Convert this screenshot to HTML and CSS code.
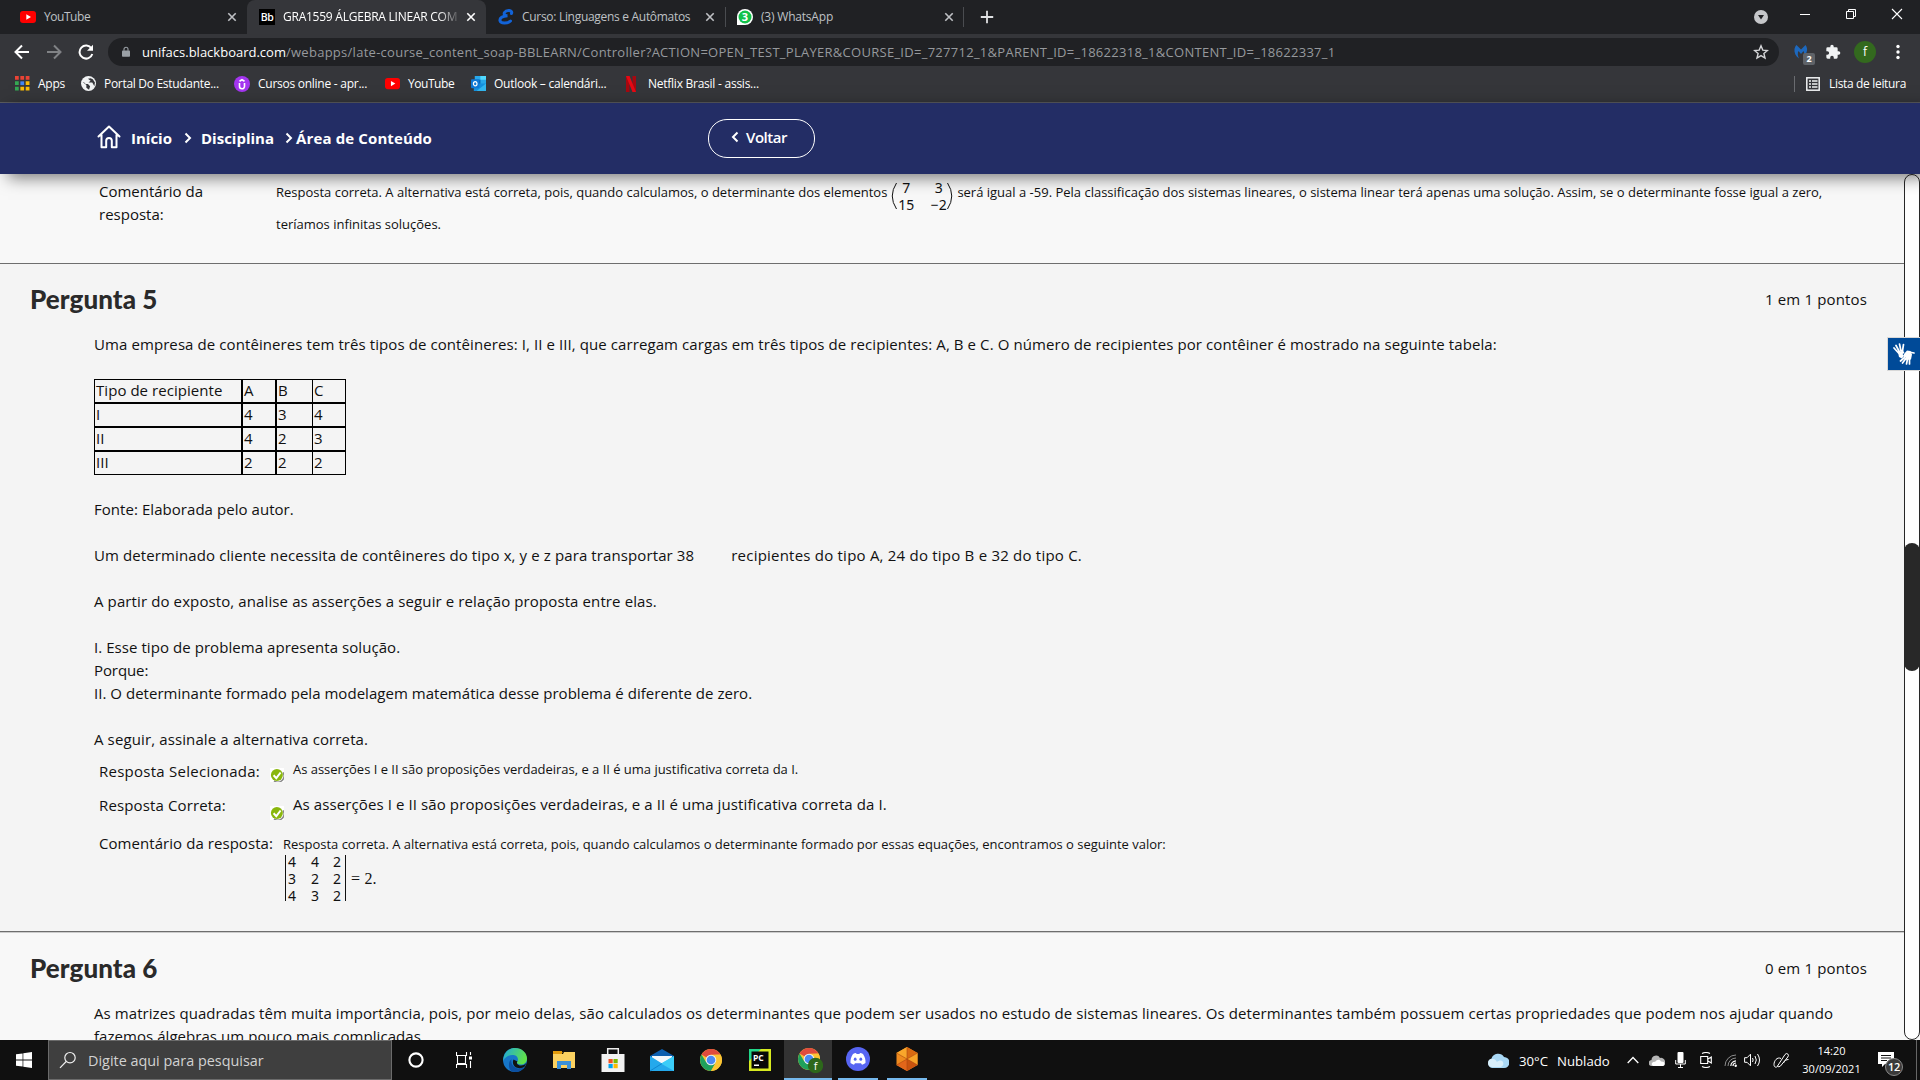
FILE: index.html
```html
<!DOCTYPE html>
<html lang="pt-BR">
<head>
<meta charset="utf-8">
<title>GRA1559 ÁLGEBRA LINEAR COMPUTACIONAL</title>
<link rel="stylesheet" href="styles.css">
</head>
<body>
<svg class="defs" width="0" height="0">
  <defs>
    <symbol id="yt" viewBox="0 0 16 16"><rect y="2" width="16" height="12" rx="3" fill="#f00"/><path d="M6.3 5.2v5.6L11 8z" fill="#fff"/></symbol>
    <symbol id="x" viewBox="0 0 10 10"><path d="M1.3 1.3l7.4 7.4M8.7 1.3L1.3 8.7" stroke="currentColor" stroke-width="1.6" fill="none"/></symbol>
    <symbol id="chev" viewBox="0 0 8 12"><path d="M1.5 1.5L6 6l-4.500 4.500" stroke="currentColor" stroke-width="2" fill="none"/></symbol>
    <symbol id="check" viewBox="0 0 14 14"><rect width="14" height="14" fill="#fff"/><path d="M13 4.500a6.200 6.200 0 0 1-9 8.300" stroke="#888" stroke-width="1.500" fill="none"/><circle cx="6.900" cy="7" r="6" fill="#8ab70d"/><path d="M3.600 7.200l2.700 2.900 4.300-5.600" stroke="#fff" stroke-width="2" fill="none"/></symbol>
    <symbol id="chrome" viewBox="0 0 24 24"><circle cx="12" cy="12" r="11" fill="#fbc534"/><path d="M2.500 6.500A11 11 0 0 1 21.500 6.500L12 7v5z" fill="#e04b3e"/><path d="M2.500 6.500A11 11 0 0 0 12 23l5-9-5-2-5 2z" fill="#1fa15d"/><path d="M12 6.700h9.600A11 11 0 0 1 12 23l4.800-8.300z" fill="#fbc534"/><circle cx="12" cy="12" r="5.300" fill="#f1f1f1"/><circle cx="12" cy="12" r="4.300" fill="#4a8af4"/></symbol>
  </defs>
</svg>

<header class="browser">
  <div class="tabs">
    <div class="tab">
      <svg class="fav"><use href="#yt"/></svg><span class="tab-title yt-title">YouTube</span><svg class="close"><use href="#x"/></svg>
    </div>
    <div class="tab active">
      <span class="fav bb">Bb</span><span class="tab-title course-title">GRA1559 ÁLGEBRA LINEAR COM</span><svg class="close"><use href="#x"/></svg>
    </div>
    <div class="tab">
      <svg class="fav" viewBox="0 0 16 16"><path d="M13.500 4.500C15 1 8.500.5 6.500 3.500 5.500 5.500 7 7 9.500 6.800 4.500 7 1.500 9 2 11.800c.6 3 7.500 3 10.500.2" stroke="#1263d8" stroke-width="3" fill="none" stroke-linecap="round"/></svg><span class="tab-title ling-title">Curso: Linguagens e Autômatos</span><svg class="close"><use href="#x"/></svg>
    </div>
    <div class="tab last">
      <svg class="fav" viewBox="0 0 16 16"><path d="M0 16V8a8 8 0 1 1 8 8z" fill="#fff"/><circle cx="8" cy="8" r="6.500" fill="#12c24a"/><text x="8" y="12" font-size="11" font-weight="700" text-anchor="middle" fill="#fff" font-family="Open Sans, sans-serif">3</text></svg><span class="tab-title wa-title">(3) WhatsApp</span><svg class="close"><use href="#x"/></svg>
    </div>
    <svg class="new-tab" viewBox="0 0 14 14"><path d="M7 .8v12.400M.8 7h12.400" stroke="#e0e1e3" stroke-width="1.800"/></svg>
    <div class="window-controls">
      <svg width="16" height="16" viewBox="0 0 16 16"><circle cx="8" cy="8" r="7" fill="#c5c7ca"/><path d="M5 6h6l-3 4.500z" fill="#202124"/></svg>
      <svg width="12" height="12" viewBox="0 0 12 12"><path d="M1 6.500h10" stroke="#fff"/></svg>
      <svg width="12" height="12" viewBox="0 0 12 12"><path d="M1.500 3.500h7v7h-7zM3.500 3.500v-2h7v7h-2" stroke="#fff" fill="none"/></svg>
      <svg width="12" height="12" viewBox="0 0 12 12"><path d="M1 1l10 10M11 1L1 11" stroke="#fff" stroke-width="1.100"/></svg>
    </div>
  </div>

  <div class="toolbar">
    <svg class="nav-icon" viewBox="0 0 16 16"><path d="M15 8H2M8 1.500L1.500 8 8 14.500" stroke="#fff" stroke-width="2" fill="none"/></svg>
    <svg class="nav-icon" viewBox="0 0 16 16"><path d="M1 8h13M8 1.500L14.500 8 8 14.500" stroke="#808285" stroke-width="2" fill="none"/></svg>
    <svg class="nav-icon" viewBox="0 0 16 16"><path d="M13.500 4.500A6.500 6.500 0 1 0 14.300 10" stroke="#fff" stroke-width="2" fill="none"/><path d="M15 .8v6H9z" fill="#fff"/></svg>
    <div class="omnibox">
      <svg class="lock" viewBox="0 0 10 14"><rect y="5" width="10" height="8" rx="1" fill="#9aa0a6"/><path d="M2.500 5.500V3.500a2.500 2.500 0 0 1 5 0v2" stroke="#9aa0a6" stroke-width="1.400" fill="none"/></svg>
      <span class="host">unifacs.blackboard.com</span><span class="path">/webapps/late-course_content_soap-BBLEARN/Controller?ACTION=OPEN_TEST_PLAYER&amp;COURSE_ID=_727712_1&amp;PARENT_ID=_18622318_1&amp;CONTENT_ID=_18622337_1</span>
      <svg class="star" viewBox="0 0 16 16"><path d="M8 1.800l1.800 4.300 4.600.4-3.500 3 1.100 4.500L8 11.600 4 14l1.100-4.500-3.500-3 4.600-.4z" stroke="#d5d6d8" stroke-width="1.400" fill="none"/></svg>
    </div>
    <div class="ext">
      <svg width="16" height="16" viewBox="0 0 16 16"><path d="M1.500 5C1 8.500 2.500 12 6 14.500 4.500 11.500 4.500 9 5.500 7L8 10l2.500-3c1 2 .8 3.500.2 5C14 9.500 15.500 5 12.500 1L8 5.500 3.500 1C2.500 2 1.800 3.500 1.500 5z" fill="#1d68bd"/></svg>
      <span class="ext-badge">2</span>
    </div>
    <svg class="puzzle" viewBox="0 0 24 24"><path d="M20.500 11H19V7a2 2 0 0 0-2-2h-4V3.500a2.500 2.500 0 0 0-5 0V5H4a2 2 0 0 0-2 2v3.800h1.500a2.700 2.700 0 0 1 0 5.400H2V20a2 2 0 0 0 2 2h3.800v-1.500a2.700 2.700 0 0 1 5.400 0V22H17a2 2 0 0 0 2-2v-4h1.500a2.500 2.500 0 0 0 0-5z" fill="#f1f3f4"/></svg>
    <span class="avatar">f</span>
    <svg class="dots" viewBox="0 0 4 16"><circle cx="2" cy="2.500" r="1.700" fill="#fff"/><circle cx="2" cy="8" r="1.700" fill="#fff"/><circle cx="2" cy="13.500" r="1.700" fill="#fff"/></svg>
  </div>

  <div class="bookmarks">
    <svg class="bm-icon" viewBox="0 0 14 14"><path d="M0 0h3.500v3.500H0zM5 0h3.500v3.500H5zM10 0h3.500v3.500H10z" fill="#ea4335"/><path d="M0 5h3.500v3.500H0zM0 10h3.500v3.500H0z" fill="#34a853"/><path d="M5 5h3.500v3.500H5z" fill="#4285f4"/><path d="M10 5h3.500v3.500H10zM5 10h3.500v3.500H5zM10 10h3.500v3.500H10z" fill="#fbbc05"/></svg>
    <span class="bm bm-apps">Apps</span>
    <svg class="bm-icon" viewBox="0 0 14 14"><circle cx="7" cy="7" r="7" fill="#f1f3f4"/><path d="M1.500 5.500L5 8.500v2.500l2.500 1.800 1-3.300L6.500 7.500H4.300L3 6zM6.500 2.500L9 4.500 7 6h3.500l2 3.500.5-3.500-2-3-2-1z" fill="#35363a"/></svg>
    <span class="bm bm-portal">Portal Do Estudante...</span>
    <svg class="bm-icon udemy" viewBox="0 0 16 16"><circle cx="8" cy="8" r="8" fill="#a435f0"/><path d="M5.500 7v3.300a2.500 2.500 0 0 0 5 0V7M5.500 5.200L8 3.700l2.500 1.500" stroke="#fff" stroke-width="1.600" fill="none"/></svg>
    <span class="bm bm-cursos">Cursos online - apr...</span>
    <svg class="bm-icon"><use href="#yt"/></svg>
    <span class="bm bm-yt">YouTube</span>
    <svg class="bm-icon" viewBox="0 0 16 16"><path d="M4 0h12v9H4z" fill="#28a8ea"/><path d="M10 0h6v4h-6z" fill="#50d9ff"/><path d="M4 4h6v5H4z" fill="#0358a7"/><path d="M3 8l13 0v8H3z" fill="#1490df"/><path d="M16 8v8H6z" fill="#32b7f0"/><rect y="3.500" width="9" height="9.500" rx="1" fill="#0f78d4"/><ellipse cx="4.500" cy="8.200" rx="1.900" ry="2.300" stroke="#fff" stroke-width="1.300" fill="none"/></svg>
    <span class="bm bm-outlook">Outlook – calendári...</span>
    <svg class="bm-icon netflix" viewBox="0 0 10 16"><path d="M0 0h3.500v16H0zM6.500 0H10v16H6.500z" fill="#a60810"/><path d="M0 0h3.500L10 16H6.500z" fill="#e50914"/></svg>
    <span class="bm bm-netflix">Netflix Brasil - assis...</span>
    <div class="reading-list">
      <svg width="14" height="14" viewBox="0 0 14 14"><rect x=".8" y=".8" width="12.400" height="12.400" stroke="#f1f3f4" stroke-width="1.500" fill="none"/><path d="M3 4h2M6 4h5.500M3 7h2M6 7h5.500M3 10h2M6 10h5.500" stroke="#f1f3f4" stroke-width="1.600"/></svg>
      <span class="bm bm-list">Lista de leitura</span>
    </div>
  </div>
</header>

<nav class="site-nav">
  <svg class="home" viewBox="0 0 24 24"><path d="M1.500 11.500L12 1.500l10.500 10M4.500 10v12.300h4.700v-6.500a2.800 2.800 0 0 1 5.600 0v6.500h4.700V10" stroke="#fff" stroke-width="2" fill="none" stroke-linejoin="round" stroke-linecap="round"/></svg>
  <span class="crumb c-inicio">Início</span>
  <svg class="chev"><use href="#chev"/></svg>
  <span class="crumb c-disc">Disciplina</span>
  <svg class="chev"><use href="#chev"/></svg>
  <span class="crumb c-area">Área de Conteúdo</span>
  <a class="back"><svg class="chev left"><use href="#chev"/></svg><span>Voltar</span></a>
</nav>

<main class="page">
  <div class="content">
    <section class="prev">
      <div class="label">Comentário da<br>resposta:</div>
      <div class="feedback">
        <div class="fb-line"><span>Resposta correta. A alternativa está correta, pois, quando calculamos, o determinante dos elementos</span>
          <div class="paren"><svg width="6" height="28" viewBox="0 0 6 28"><path d="M5.500 1Q-3 14 5.500 27" stroke="#111" fill="none"/></svg>
            <div class="m2"><i>7</i><i>3</i><i>15</i><i>−2</i></div>
            <svg width="6" height="28" viewBox="0 0 6 28"><path d="M.5 1Q9 14 .5 27" stroke="#111" fill="none"/></svg></div>
          <span>será igual a -59. Pela classificação dos sistemas lineares, o sistema linear terá apenas uma solução. Assim, se o determinante fosse igual a zero,</span></div>
        <div class="fb-line2">teríamos infinitas soluções.</div>
      </div>
    </section>

    <section class="question q5">
      <div class="q-head"><h2>Pergunta 5</h2><span class="points">1 em 1 pontos</span></div>
      <div class="q-body">
        <p class="l1">Uma empresa de contêineres tem três tipos de contêineres: I, II e III, que carregam cargas em três tipos de recipientes: A, B e C. O número de recipientes por contêiner é mostrado na seguinte tabela:</p>
        <table>
          <tr><td>Tipo de recipiente</td><td>A</td><td>B</td><td>C</td></tr>
          <tr><td>I</td><td>4</td><td>3</td><td>4</td></tr>
          <tr><td>II</td><td>4</td><td>2</td><td>3</td></tr>
          <tr><td>III</td><td>2</td><td>2</td><td>2</td></tr>
        </table>
        <p class="l2">Fonte: Elaborada pelo autor.</p>
        <p class="l3"><span>Um determinado cliente necessita de contêineres do tipo x, y e z para transportar 38</span><span class="l3b">recipientes do tipo A, 24 do tipo B e 32 do tipo C.</span></p>
        <p class="l4">A partir do exposto, analise as asserções a seguir e relação proposta entre elas.</p>
        <p class="l5">I. Esse tipo de problema apresenta solução.</p>
        <p class="tight l6">Porque:</p>
        <p class="tight l7">II. O determinante formado pela modelagem matemática desse problema é diferente de zero.</p>
        <p class="l8">A seguir, assinale a alternativa correta.</p>
      </div>
      <div class="answers">
        <div class="row r1"><span class="label a1">Resposta Selecionada:</span><svg class="ok"><use href="#check"/></svg><span class="small">As asserções I e II são proposições verdadeiras, e a II é uma justificativa correta da I.</span></div>
        <div class="row r2"><span class="label a2">Resposta Correta:</span><svg class="ok"><use href="#check"/></svg><span class="big">As asserções I e II são proposições verdadeiras, e a II é uma justificativa correta da I.</span></div>
        <div class="row r3"><span class="label">Comentário da resposta:</span>
          <div class="comment"><div class="small">Resposta correta. A alternativa está correta, pois, quando calculamos o determinante formado por essas equações, encontramos o seguinte valor:</div>
            <div class="det"><div class="m3"><i>4</i><i>4</i><i>2</i><i>3</i><i>2</i><i>2</i><i>4</i><i>3</i><i>2</i></div><span>= 2.</span></div>
          </div>
        </div>
      </div>
    </section>

    <section class="question q6">
      <div class="q-head"><h2>Pergunta 6</h2><span class="points">0 em 1 pontos</span></div>
      <div class="q-body">
        <p class="l9">As matrizes quadradas têm muita importância, pois, por meio delas, são calculados os determinantes que podem ser usados no estudo de sistemas lineares. Os determinantes também possuem certas propriedades que podem nos ajudar quando</p>
        <p class="tight l2">fazemos álgebras um pouco mais complicadas.</p>
      </div>
    </section>
  </div>
  <div class="scrollbar"><div class="thumb"></div></div>
  <div class="libras"><svg width="22" height="22" viewBox="0 0 22 22"><g stroke="#fff" stroke-linecap="round" fill="none" stroke-width="1.700"><path d="M5.500 10L1 5M6.500 9L3 2.500M8 8L6.500 1M9.500 8L10.500 1.500M12.500 16l-3 4M14.500 16l-1 5M16.500 15.500v5.500M11.500 14.500l-4 3.500M16 9l5 1"/></g><path d="M5 9.500l5-2 1.500 2.500-2 1 1.500 1.500-2 3-3-1.500z" fill="#fff"/><path d="M11 11l3-3.500 3.500.5 1.500 3.500-1 5-6.500.5 1-2.500-2-.5z" fill="#fff"/></svg></div>
</main>

<footer class="taskbar">
  <div class="start"><svg width="16" height="16" viewBox="0 0 16 16"><path d="M0 2.300l6.600-.9v6.200H0zM7.300 1.300L16 0v7.600H7.300zM0 8.400h6.600v6.200L0 13.700zM7.300 8.400H16V16l-8.700-1.300z" fill="#fff"/></svg></div>
  <div class="search"><svg width="18" height="18" viewBox="0 0 18 18"><circle cx="11" cy="6.700" r="5.200" stroke="#f0f0f0" stroke-width="1.200" fill="none"/><path d="M7.200 10.500L1 16.800" stroke="#f0f0f0" stroke-width="1.200"/></svg><span>Digite aqui para pesquisar</span></div>
  <div class="apps">
    <div class="app cortana"><svg width="16" height="16" viewBox="0 0 16 16"><circle cx="8" cy="8" r="6.600" stroke="#fff" stroke-width="2.100" fill="none"/></svg></div>
    <div class="app tv"><svg width="16" height="16" viewBox="0 0 16 16"><path d="M.5 0v3.500h10V0M1.500 3.500h8v8h-8zM.5 16v-3.500h10V16M14.500 0v3M14.500 9v7" stroke="#fff" fill="none" stroke-width="1.100"/><rect x="13" y="4.500" width="3" height="3" fill="#fff"/></svg></div>
    <div class="app"><svg width="24" height="24" viewBox="0 0 24 24"><defs><linearGradient id="e1" x1="0" x2="1" y1="0" y2=".3"><stop offset="0" stop-color="#1da8e0"/><stop offset="1" stop-color="#5fe04a"/></linearGradient></defs><circle cx="12" cy="12" r="12" fill="#1676c9"/><path d="M1 8C3 2 8 0 12 0c7 0 12 5 12 10.500 0 4-3 6-6 6-3.500 0-4.500-1.200-4-2.500 2-2 1-6.500-3.500-7C6 6.600 2.500 8.500 0 13z" fill="url(#e1)"/><path d="M8.500 11c-1 4 1.500 9 7 9.500 3 .2 5-1 6.500-2-2.500 4.500-8 6.500-13 5C5 21.500 5 13.500 8.500 11z" fill="#0c4fa0"/><path d="M14.500 13.500c-1.500 1.300-.2 4 3.500 4 2 0 4-.8 5.200-2.500L22 18.300c-2 1.700-5 2.300-8 1.500-3.500-1-5-5-3.500-8.300z" fill="#111"/></svg></div>
    <div class="app"><svg width="22" height="20" viewBox="0 0 22 20"><path d="M0 1h8l2 2H0z" fill="#e39b0b"/><path d="M0 4h10l1-2h11v16H0z" fill="#fbd160"/><path d="M0 1h9v3H0z" fill="#e39b0b"/><path d="M4 11h14v8h-4v-4H8v4H4z" fill="#3a90d8"/></svg></div>
    <div class="app"><svg width="24" height="24" viewBox="0 0 24 24"><path d="M6.700 7V.8h10.600V7" stroke="#eee" stroke-width="1.500" fill="none"/><path d="M.5 6h23v18H.5z" fill="#f2f2f2"/><path d="M7.500 11h4.200v4.200H7.500z" fill="#f25022"/><path d="M12.500 11h4.200v4.200h-4.200z" fill="#7fba00"/><path d="M7.500 16h4.200v4.200H7.500z" fill="#00a4ef"/><path d="M12.500 16h4.200v4.200h-4.200z" fill="#ffb900"/></svg></div>
    <div class="app"><svg width="24" height="24" viewBox="0 0 24 24"><path d="M0 8l12-7 12 7v3H0z" fill="#0d5faf"/><path d="M2 8h20v10H2z" fill="#f4f8fb"/><path d="M0 8l12 7.500L24 8v15H0z" fill="#24a9ec"/><path d="M24 8v15L11 15.500z" fill="#3bcdf8"/><path d="M0 23l12-7.500" stroke="#1286cf"/></svg></div>
    <div class="app"><svg width="24" height="24"><use href="#chrome"/></svg></div>
    <div class="app"><svg width="22" height="22" viewBox="0 0 22 22"><rect width="22" height="22" fill="#d8ea20"/><path d="M0 0h12L0 12z" fill="#21d789"/><rect x="2.500" y="2.500" width="17" height="17" fill="#080808"/><rect x="5" y="15.500" width="5" height="1.500" fill="#fff"/><text x="4" y="11.500" font-size="8.500" font-weight="700" fill="#fff" font-family="Open Sans, sans-serif">PC</text></svg></div>
    <div class="app on"><svg width="27" height="27" viewBox="0 0 27 27"><use href="#chrome" x="1" y="1" width="24" height="24"/><circle cx="19.500" cy="19.500" r="7.700" fill="#2d681b"/><text x="19.500" y="23.500" font-size="11" text-anchor="middle" fill="#fff" font-family="Open Sans, sans-serif">f</text></svg></div>
    <div class="app run"><svg width="24" height="24" viewBox="0 0 24 24"><circle cx="12" cy="12" r="12" fill="#5765f2"/><path d="M7 7c1-.6 2-.9 3-1l.6 1h2.800l.6-1c1 .1 2 .4 3 1 2 3 2.800 6 2.500 9-1 .9-2.200 1.500-3.500 1.800l-1-1.500H9l-1 1.500C6.700 17.500 5.500 16.900 4.500 16c-.3-3 .5-6 2.500-9z" fill="#fff"/><ellipse cx="9.200" cy="12.200" rx="1.400" ry="1.600" fill="#5765f2"/><ellipse cx="14.800" cy="12.200" rx="1.400" ry="1.600" fill="#5765f2"/></svg></div>
    <div class="app run"><svg width="22" height="24" viewBox="0 0 22 24"><path d="M11 0l10.500 6v12L11 24 .5 18V6z" fill="#ef8a1e"/><path d="M11 0v12L.5 6z" fill="#f9a62b"/><path d="M11 0l10.500 6L11 12z" fill="#d96a12"/><path d="M.5 18L11 12v12z" fill="#e2661a"/><path d="M21.500 6v12L11 12z" fill="#f7a328"/><path d="M11 12l10.500 6L11 24z" fill="#c9530f"/><path d="M11 0v24M.5 6L21.500 18M21.500 6L.5 18" stroke="#a94810" stroke-width=".6"/></svg></div>
  </div>
  <div class="tray">
    <svg width="22" height="16" viewBox="0 0 22 16"><path d="M5 16a5 5 0 0 1-.5-9.500A7 7 0 0 1 17 5a5.500 5.500 0 0 1 0 11z" fill="#a9d8f5"/><path d="M5 15a4 4 0 0 1 0-8c3-.5 4 1 5 3 2-2 5-2 6 0 1 2 0 4-2 5z" fill="#d9effb"/></svg>
    <span class="temp">30°C</span><span class="temp">Nublado</span>
    <svg width="12" height="8" viewBox="0 0 12 8"><path d="M.7 7L6 1.500 11.300 7" stroke="#fff" stroke-width="1.300" fill="none"/></svg>
    <svg width="16" height="11" viewBox="0 0 16 11"><path d="M3 11a3 3 0 0 1-.5-6A4.500 4.500 0 0 1 11 3a4 4 0 0 1 2 8z" fill="#b5b5b5"/><path d="M4 11c-3-2 0-5 2-4 2-3 5-3 6-.5 4-.5 5 4 2 4.500z" fill="#fff"/></svg>
    <svg width="11" height="16" viewBox="0 0 11 16"><rect x="2.500" width="6" height="11" rx="1" fill="#fff"/><path d="M.7 8v4h9.600V8M5.500 12v3.500M3 15.500h5" stroke="#fff" fill="none"/></svg>
    <svg width="12" height="16" viewBox="0 0 12 16"><path d="M.7 4.500h7v7h-7zM8 7l3.300-2v6L8 9M2 1.500q4-2 8 0M2 14.500q4 2 8 0" stroke="#fff" fill="none" stroke-width="1.100"/></svg>
    <svg width="13" height="13" viewBox="0 0 13 13"><path d="M1 12A11 11 0 0 1 12 1M4 12a8 8 0 0 1 8-8" stroke="#8d8d8d" fill="none"/><path d="M6.800 12A5.500 5.500 0 0 1 12 6.800M9 12a3 3 0 0 1 3-3" stroke="#fff" fill="none" stroke-width="1.200"/><circle cx="11.700" cy="11.700" r="1.200" fill="#fff"/></svg>
    <svg width="17" height="14" viewBox="0 0 17 14"><path d="M.6 4.700h2.500L6.500 1.200v11.600L3.100 9.300H.6zM8.500 5q1.300 2 0 4M11 3q2.600 4 0 8M13.500 1q4 6 0 12" stroke="#fff" fill="none"/></svg>
    <svg width="16" height="16" viewBox="0 0 16 16"><path d="M4.500 14L12 2.500q1.500-1.800 2.800-.5t0 3L7.500 14q-1.800 1.800-3 0zM8 6.500C4 4.500 1 9 1 12.500s3 3 4 1.500M10.500 11c1-2.500 3-3.500 5-3.500" stroke="#fff" fill="none"/></svg>
    <div class="clock"><span>14:20</span><span>30/09/2021</span></div>
    <div class="notif"><svg width="17" height="16" viewBox="0 0 17 16"><path d="M0 0h16v12H7l-3 3v-3H0z" fill="#fff"/><path d="M3 3.500h10M3 6h10M3 8.500h6" stroke="#111"/></svg><span class="count">12</span></div>
    <div class="desk"></div>
  </div>
</footer>
</body>
</html>
```
FILE: styles.css
```css
* { box-sizing: border-box; }
body { margin: 0; width: 1920px; height: 1080px; overflow: hidden; display: flex; flex-direction: column; font-family: "Open Sans", sans-serif; background: #f8f8f8; color: #111; }
svg { display: block; flex: none; }
.defs { position: absolute; }
i { font-style: normal; }
span { white-space: nowrap; }

/* browser frame */
.browser { height: 103px; flex: none; background: #35363a; border-bottom: 1px solid #5b5c60; font-size: 12px; color: #fff; }
.tabs { height: 34px; background: #202124; padding-left: 8px; display: flex; align-items: stretch; }
.tab { width: 239px; padding: 0 0 1px 12px; display: flex; align-items: center; color: #bfc1c5; }
.tab.active { background: #35363a; color: #fff; border-radius: 8px 8px 0 0; }
.tab.last { border-left: 1px solid #4a4c50; border-right: 1px solid #4a4c50; height: 20px; align-self: center; }
.tab.last .fav { margin-left: -1px; }
.fav { width: 16px; height: 16px; margin-right: 8px; flex: none; }
.bb { background: #000; color: #fff; font-size: 10.5px; line-height: 16px; text-align: center; font-weight: 600; letter-spacing: -.4px; }
.tab-title { width: 176px; letter-spacing: -.3px; }
.yt-title { letter-spacing: -.45px; }
.course-title { letter-spacing: -.24px; -webkit-mask-image: linear-gradient(90deg, #000 156px, transparent 178px); mask-image: linear-gradient(90deg, #000 156px, transparent 178px); }
.wa-title { letter-spacing: -.2px; }
.close { width: 10px; height: 10px; margin-left: 7px; }
.new-tab { width: 14px; height: 14px; margin: 10px 0 0 16px; }
.window-controls { margin: 0 17px 0 auto; display: grid; grid-template-columns: 16px 12px 12px 12px; column-gap: 34px; align-items: center; padding-bottom: 6px; }
.window-controls svg:first-child { margin: 6px 0 0 4px; }
.toolbar { height: 36px; padding: 4px 20px 4px 14px; display: flex; align-items: center; }
.nav-icon { width: 16px; height: 16px; margin-right: 16px; }
.omnibox { width: 1672px; height: 28px; margin-left: -2px; border-radius: 14px; background: #202124; display: flex; align-items: center; padding: 0 10px 0 14px; font-size: 13px; }
.lock { width: 8px; height: 12px; margin-right: 12px; }
.path { color: #96999d; letter-spacing: .275px; }
.star { width: 16px; height: 16px; margin-left: auto; }
.ext { width: 20px; height: 16px; margin-left: 14px; position: relative; }
.ext-badge { position: absolute; left: 10px; top: 9px; width: 12px; height: 12px; border-radius: 2px; background: #5f6368; font-size: 9px; line-height: 12px; text-align: center; font-weight: 700; }
.puzzle { width: 16px; height: 16px; margin-left: 12px; }
.avatar { width: 22px; height: 22px; border-radius: 50%; background: #33691e; line-height: 21px; text-align: center; margin-left: 13px; }
.dots { width: 4px; height: 16px; margin-left: 20px; }
.bookmarks { height: 27px; display: flex; align-items: center; padding: 0 14px 0 15px; letter-spacing: -.25px; }
.bm-icon { width: 15px; height: 15px; margin-right: 8px; }
.bm { flex: none; }
.bm-apps { width: 43px; }
.bm-portal { width: 130px; letter-spacing: -.3px; }
.bm-cursos { width: 127px; letter-spacing: -.26px; }
.bm-yt { width: 63px; letter-spacing: -.45px; }
.bm-outlook { width: 132px; }
.netflix { width: 10px; height: 16px; margin-right: 12px; }
.udemy { width: 16px; height: 16px; }
.reading-list { margin-left: auto; height: 16px; border-left: 1px solid #6a6c70; padding-left: 11px; display: flex; gap: 9px; align-items: center; }
.bm-list { letter-spacing: -.33px; }

/* breadcrumb bar */
.site-nav { height: 71px; flex: none; background: #232d65; display: flex; align-items: center; padding: 0 0 1px 97px; color: #fff; font-weight: 700; font-size: 15px; position: relative; z-index: 2; box-shadow: 8px 4px 15px rgba(0,0,0,.5); }
.home { width: 24px; height: 24px; margin-top: -2px; }
.crumb { flex: none; margin-top: -1px; }
.c-inicio { width: 53px; margin-left: 10px; }
.c-disc { width: 84px; margin-left: 9px; }
.c-area { width: 412px; margin-left: 3px; letter-spacing: .13px; }
.chev { width: 8px; height: 12px; }
.left { transform: scaleX(-1); }
.back { width: 107px; height: 39px; border: 1px solid #fff; border-radius: 19px; display: flex; align-items: center; gap: 7px; padding: 0 0 2px 22px; font-weight: 600; letter-spacing: -.47px; }

/* test page */
.page { height: 866px; flex: none; display: flex; overflow: hidden; position: relative; font-size: 15px; line-height: 23px; }
.content { width: 1904px; flex: none; }
.prev { height: 89px; display: flex; padding: 7px 0 0 99px; }
.prev .label { width: 177px; margin-top: -1px; }
.feedback { font-size: 13px; flex: none; }
.fb-line { display: flex; height: 30px; }
.fb-line2 { line-height: 26px; }
.paren { display: flex; margin: 1px 4px 0 4px; width: 62px; height: 28px; justify-content: space-between; }
.m2 { display: grid; grid-template-columns: 17px 1fr; width: 49px; font: 14px/17px "Noto Sans", sans-serif; margin-top: -3px; }
.m2 i { text-align: center; white-space: nowrap; }
.m2 i:nth-child(2n) { text-align: right; }
.m2 i:nth-child(2) { padding-right: 4px; }
.question { border-top: 1px solid #6e6e6e; }
.q5 { height: 668px; background: #f4f4f4; }
.q6 { background: #f8f8f8; box-shadow: inset 0 1px #ccc; }
.q-head { height: 69px; padding: 19px 37px 0 30px; display: flex; justify-content: space-between; }
.q6 .q-head { padding-top: 20px; height: 70px; }
h2 { margin: 0; font: 900 26px/32px Lato, sans-serif; color: #2a2a2a; letter-spacing: .05px; }
.points { letter-spacing: .15px; line-height: 33px; }
.q-body { padding-left: 94px; letter-spacing: .05px; }
p { margin: 23px 0 0; height: 23px; white-space: nowrap; }
.q-body p:first-child, p.tight { margin-top: 0; }
table { border-collapse: separate; border-spacing: 0; border: 0; margin-top: 23px; width: 252px; table-layout: fixed; line-height: 20px; }
td { border: 1px solid #000; padding: 0 0 2px 1px; height: 24px; }
td:nth-child(1) { width: 148px; }
td:nth-child(2) { width: 34px; }
td:nth-child(3) { width: 36px; border-right: 0; }
td:nth-child(4) { width: 34px; }
.l1 { letter-spacing: .087px; }
.l3, .l4 { letter-spacing: .11px; }
.l3b { letter-spacing: .22px; margin-left: 37px; }
.l5 { letter-spacing: .06px; }
.l6 { letter-spacing: -.1px; }
.l7 { letter-spacing: .03px; }
.l8 { letter-spacing: .12px; }
.l9 { letter-spacing: .076px; }
.answers { padding: 9px 0 0 99px; }
.row { display: flex; }
.r1 { height: 34px; }
.r2 { height: 38px; }
.row .label { width: 171px; flex: none; letter-spacing: .06px; }
.row .a1 { letter-spacing: .26px; }
.row .a2 { letter-spacing: .14px; }
.ok { width: 14px; height: 14px; margin: 8px 9px 0 0; }
.r2 .ok { margin-top: 12px; }
.small { font-size: 13px; letter-spacing: -.01px; }
.r1 .small { line-height: 19px; letter-spacing: -.02px; }
.big { line-height: 21px; letter-spacing: .1px; }
.r3 .label { width: 184px; }
.comment .small { height: 23px; line-height: 24px; }
.det { display: flex; align-items: center; gap: 5px; }
.m3 { display: grid; grid-template-columns: 23px 22px 12px; border: solid #111; border-width: 0 1.500px; height: 46px; width: 61px; padding-left: 2px; margin-left: 2px; grid-auto-rows: 17px; align-content: center; font: 14px/17px "Noto Sans", sans-serif; }
.det span { font: 16px/17px "Liberation Serif", serif; letter-spacing: .2px; }
.scrollbar { width: 16px; border: 1px solid #282828; border-radius: 8px; background: #fff; padding-top: 368px; }
.thumb { width: 16px; height: 128px; margin-left: -1px; background: #282828; border-radius: 8px; }
.libras { position: absolute; left: 1887px; top: 163px; width: 34px; height: 34px; background: #004a98; border: 1px solid #d8d8d8; padding: 5px; }

/* taskbar */
.taskbar { height: 40px; flex: none; background: #101010; display: flex; color: #fff; }
.start { width: 48px; padding: 12px 16px; }
.search { width: 344px; border: 1px solid #6b6b6b; background: #3f3f3f; display: flex; align-items: center; gap: 11px; padding-left: 10px; color: #d2d2d2; font-size: 14.4px; }
.apps { display: flex; }
.app { width: 49px; display: flex; align-items: center; justify-content: center; }
.app.cortana { padding-right: 2px; }
.app.tv { padding-right: 4px; }
.app.on { background: #333; border-bottom: 2px solid #76b9ed; width: 48px; padding-left: 3px; }
.app.run { border-bottom: 2px solid #76b9ed; width: 40px; margin-left: 6px; margin-right: 3px; }
.tray { margin-left: auto; display: grid; grid-template-columns: 31px 38px 70px 22px 26px 25px 24px 20px 29px 23px 72px 48px 4px; align-items: center; }
.tray > svg:first-child { margin-left: -1px; }
.temp { font-size: 13.2px; margin-top: 1px; }
.clock { display: flex; flex-direction: column; align-items: center; font-size: 11px; line-height: 18px; width: 71px; }
.notif { position: relative; padding-left: 10px; }
.count { position: absolute; left: 17px; top: 6px; width: 18px; height: 18px; border-radius: 50%; background: #3a3a3a; border: 1px solid #888; font-size: 11px; line-height: 15px; text-align: center; font-weight: 600; letter-spacing: -.3px; }
.desk { border-left: 1px solid #666; height: 40px; }
```
